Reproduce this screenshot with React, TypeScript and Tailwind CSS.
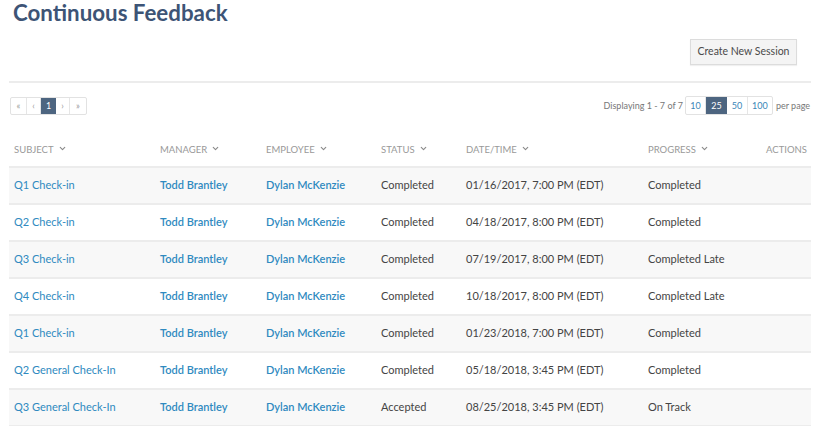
import { ChevronDown } from "lucide-react";

const rows = [
  { subject: "Q1 Check-in", status: "Completed", date: "01/16/2017, 7:00 PM (EDT)", progress: "Completed" },
  { subject: "Q2 Check-in", status: "Completed", date: "04/18/2017, 8:00 PM (EDT)", progress: "Completed" },
  { subject: "Q3 Check-in", status: "Completed", date: "07/19/2017, 8:00 PM (EDT)", progress: "Completed Late" },
  { subject: "Q4 Check-in", status: "Completed", date: "10/18/2017, 8:00 PM (EDT)", progress: "Completed Late" },
  { subject: "Q1 Check-in", status: "Completed", date: "01/23/2018, 7:00 PM (EDT)", progress: "Completed" },
  { subject: "Q2 General Check-In", status: "Completed", date: "05/18/2018, 3:45 PM (EDT)", progress: "Completed" },
  { subject: "Q3 General Check-In", status: "Accepted", date: "08/25/2018, 3:45 PM (EDT)", progress: "On Track" },
];

const cols = "grid grid-cols-[146px_106px_115px_85px_182px_1fr_60px]";

function SortHead({ label }: { label: string }) {
  return (
    <div className="flex items-center gap-1 pl-[5px]">
      <span>{label}</span>
      <ChevronDown size={9} strokeWidth={3} className="text-[#8a8a8a] -mt-[3px]" />
    </div>
  );
}

export default function App() {
  return (
    <div className="w-[818px] h-[426px] overflow-hidden bg-white font-['Lato','Liberation_Sans',sans-serif] text-[11px] text-[#444]">
      {/* Header */}
      <h1 className="pl-[13px] pt-[1px] text-[22.3px] font-bold leading-[24px] text-[#3d5476]">Continuous Feedback</h1>
      <div className="flex justify-end pr-[21px] mt-[14px]">
        <button className="h-[26px] w-[107px] bg-[#f4f4f4] border border-[#dcdcdc] text-[10.5px] text-[#4a4a4a] shadow-[0_1px_1px_rgba(0,0,0,0.06)]">
          Create New Session
        </button>
      </div>
      <div className="mx-[9px] mt-[16px] border-t-2 border-[#ececec] w-[802px]" />

      {/* Pagination */}
      <div className="flex items-center justify-between pl-[10px] pr-[8px] mt-[13px]">
        <div className="flex h-[18px] border border-[#e2e2e2] rounded-[2px] text-[9px] text-[#9a9a9a]">
          <span className="w-[16px] flex items-center justify-center border-r border-[#e6e6e6]">«</span>
          <span className="w-[14px] flex items-center justify-center border-r border-[#e6e6e6]">‹</span>
          <span className="w-[15px] flex items-center justify-center bg-[#4d6580] text-white">1</span>
          <span className="w-[14px] flex items-center justify-center border-r border-[#e6e6e6]">›</span>
          <span className="w-[16px] flex items-center justify-center">»</span>
        </div>
        <div className="flex items-center text-[9px] text-[#777]">
          <span className="mr-[2px]">Displaying 1 - 7 of 7</span>
          <div className="flex h-[19px] border border-[#e2e2e2] rounded-[2px] text-[#3a86b8]">
            <span className="w-[20px] flex items-center justify-center border-r border-[#e6e6e6]">10</span>
            <span className="w-[21px] flex items-center justify-center bg-[#4d6580] text-white">25</span>
            <span className="w-[21px] flex items-center justify-center border-r border-[#e6e6e6]">50</span>
            <span className="w-[24px] flex items-center justify-center">100</span>
          </div>
          <span className="ml-[3px]">per page</span>
        </div>
      </div>

      {/* Table */}
      <div className="mx-[9px] mt-[19px] w-[802px]">
        <div className={`${cols} h-[34px] items-center border-b-2 border-[#ececec] text-[9.5px] uppercase text-[#999]`}>
          <SortHead label="Subject" />
          <SortHead label="Manager" />
          <SortHead label="Employee" />
          <SortHead label="Status" />
          <SortHead label="Date/Time" />
          <SortHead label="Progress" />
          <div className="text-right pr-[4px]">Actions</div>
        </div>
        {rows.map((r, i) => (
          <div
            key={i}
            className={`${cols} h-[37px] items-center border-b-2 border-[#ececec] ${i % 2 === 0 ? "bg-[#f8f8f8]" : "bg-white"}`}
          >
            <div className="pl-[5px] text-[#2f8ac0]">{r.subject}</div>
            <div className="pl-[5px] text-[#2f8ac0] font-semibold">Todd Brantley</div>
            <div className="pl-[5px] text-[#2f8ac0] font-semibold">Dylan McKenzie</div>
            <div className="pl-[5px]">{r.status}</div>
            <div className="pl-[5px]">{r.date}</div>
            <div className="pl-[5px]">{r.progress}</div>
            <div />
          </div>
        ))}
      </div>
    </div>
  );
}
